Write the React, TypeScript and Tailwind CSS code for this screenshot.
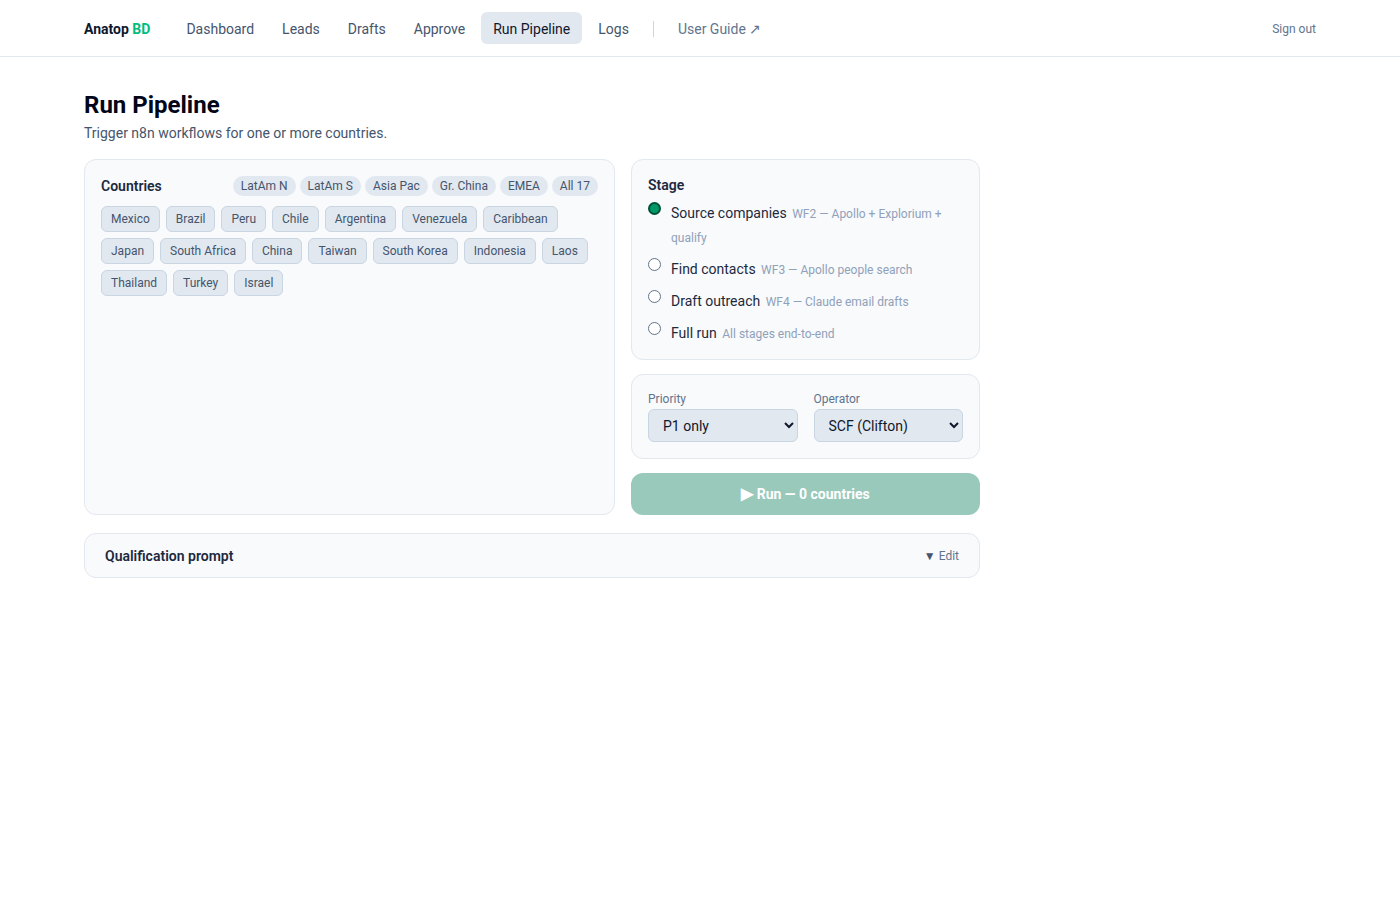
import React, { useState } from 'react';

const NAV = ['Dashboard', 'Leads', 'Drafts', 'Approve', 'Run Pipeline', 'Logs'];
const REGIONS = ['LatAm N', 'LatAm S', 'Asia Pac', 'Gr. China', 'EMEA', 'All 17'];
const COUNTRIES = [
  'Mexico', 'Brazil', 'Peru', 'Chile', 'Argentina', 'Venezuela', 'Caribbean',
  'Japan', 'South Africa', 'China', 'Taiwan', 'South Korea', 'Indonesia', 'Laos',
  'Thailand', 'Turkey', 'Israel',
];
const STAGES = [
  { id: 'source', name: 'Source companies', desc: 'WF2 — Apollo + Explorium + qualify' },
  { id: 'contacts', name: 'Find contacts', desc: 'WF3 — Apollo people search' },
  { id: 'draft', name: 'Draft outreach', desc: 'WF4 — Claude email drafts' },
  { id: 'full', name: 'Full run', desc: 'All stages end-to-end' },
];

function Header() {
  return (
    <header className="border-b border-slate-200 bg-white">
      <div className="max-w-7xl mx-auto px-6 h-14 pt-0.5 flex items-center">
        <div className="text-sm font-bold text-slate-900 mr-6">
          Anatop <span className="text-emerald-500">BD</span>
        </div>
        <nav className="flex items-center gap-1">
          {NAV.map(n => (
            <a
              key={n}
              className={
                n === 'Run Pipeline'
                  ? 'px-3 h-8 -mt-0.5 flex items-center rounded-md bg-slate-200 text-slate-900 text-sm pt-0.5'
                  : 'px-3 h-8 flex items-center rounded-md text-slate-600 text-sm'
              }
            >
              {n}
            </a>
          ))}
          <span className="mx-2 w-px h-4 bg-slate-300" />
          <a className="px-3 text-sm text-slate-500">User Guide ↗</a>
        </nav>
        <a className="ml-auto text-xs text-slate-500">Sign out</a>
      </div>
    </header>
  );
}

export default function App() {
  const [stage, setStage] = useState('source');
  const [picked, setPicked] = useState([]);

  const toggle = c => setPicked(p => (p.includes(c) ? p.filter(x => x !== c) : [...p, c]));

  return (
    <div className="min-h-screen bg-white text-slate-800" style={{ fontFamily: 'Roboto, "Noto Sans", sans-serif' }}>
      <Header />

      <main className="max-w-7xl mx-auto px-6 pt-8">
        <div className="max-w-4xl">
          <h1 className="text-2xl leading-8 font-bold text-slate-950">Run Pipeline</h1>
          <p className="text-sm leading-5 text-slate-600 mt-0.5">Trigger n8n workflows for one or more countries.</p>

          <div className="grid grid-cols-[1fr_349px] gap-4 mt-4">
            {/* countries */}
            <section className="rounded-xl border border-slate-200 bg-slate-50 p-4">
              <div className="flex items-center justify-between">
                <h2 className="text-sm font-semibold text-slate-800">Countries</h2>
                <div className="flex gap-1">
                  {REGIONS.map(r => (
                    <button key={r} className="px-2 h-5 rounded-full bg-slate-200 text-xs text-slate-600">
                      {r}
                    </button>
                  ))}
                </div>
              </div>
              <div className="flex flex-wrap gap-1.5 mt-2.5">
                {COUNTRIES.map(c => (
                  <button
                    key={c}
                    onClick={() => toggle(c)}
                    className={
                      picked.includes(c)
                        ? 'px-[9px] h-[26px] rounded-md border border-emerald-600 bg-emerald-600 text-white text-xs'
                        : 'px-[9px] h-[26px] rounded-md border border-slate-300 bg-slate-200 text-slate-600 text-xs'
                    }
                  >
                    {c}
                  </button>
                ))}
              </div>
            </section>

            <div className="flex flex-col gap-3.5">
              {/* stage */}
              <section className="rounded-xl border border-slate-200 bg-slate-50 px-4 pt-4 pb-1.5">
                <h2 className="text-sm leading-[18px] font-semibold text-slate-800">Stage</h2>
                <div className="mt-[7px]">
                  {STAGES.map(s => (
                    <label key={s.id} className="flex items-start gap-2.5 cursor-pointer mb-2" onClick={() => setStage(s.id)}>
                      <span
                        className={
                          stage === s.id
                            ? 'mt-px w-[13px] h-[13px] shrink-0 rounded-full bg-emerald-600 border-2 border-emerald-900'
                            : 'mt-px w-[13px] h-[13px] shrink-0 rounded-full bg-white border border-slate-500'
                        }
                      />
                      <span className="text-sm leading-6 text-slate-800">
                        {s.name}{' '}
                        <span className="text-xs leading-none text-slate-400 ml-0.5">{s.desc}</span>
                      </span>
                    </label>
                  ))}
                </div>
              </section>

              {/* priority + operator */}
              <section className="rounded-xl border border-slate-200 bg-slate-50 p-4 grid grid-cols-2 gap-4">
                <div>
                  <div className="text-xs leading-4 text-slate-500 mb-0.5">Priority</div>
                  <select className="w-full h-[33px] rounded-md border border-slate-300 bg-slate-200 px-2.5 text-sm text-slate-900">
                    <option>P1 only</option>
                    <option>P1 + P2</option>
                    <option>All</option>
                  </select>
                </div>
                <div>
                  <div className="text-xs leading-4 text-slate-500 mb-0.5">Operator</div>
                  <select className="w-full h-[33px] rounded-md border border-slate-300 bg-slate-200 px-2.5 text-sm text-slate-900">
                    <option>SCF (Clifton)</option>
                  </select>
                </div>
              </section>

              <button
                disabled={picked.length === 0}
                className="h-[42px] rounded-xl bg-[#99c9bb] text-white text-sm font-bold"
              >
                <span className="text-base">▶</span> Run — {picked.length} countries
              </button>
            </div>
          </div>

          <section className="mt-[18px] rounded-xl border border-slate-200 bg-slate-50 px-5 h-[45px] flex items-center justify-between">
            <h2 className="text-sm font-semibold text-slate-800">Qualification prompt</h2>
            <button className="text-xs text-slate-500">
              <span className="text-slate-600">▼</span> Edit
            </button>
          </section>
        </div>
      </main>
    </div>
  );
}
